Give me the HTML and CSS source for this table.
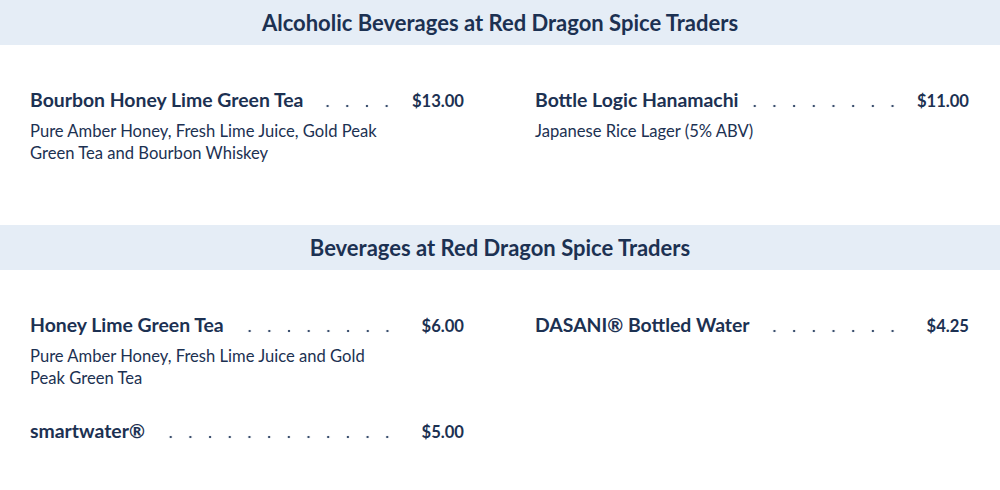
FILE: index.html
```html
<!DOCTYPE html>
<html lang="en">
<head>
<meta charset="utf-8">
<title>Red Dragon Spice Traders</title>
<link rel="stylesheet" href="styles.css">
</head>
<body>
<section class="menu-section">
  <h2 class="band">Alcoholic Beverages at Red Dragon Spice Traders</h2>
  <div class="items">
    <div class="item">
      <div class="item-head"><span class="name">Bourbon Honey Lime Green Tea</span><span class="dots"></span><span class="price">$13.00</span></div>
      <p class="desc">Pure Amber Honey, Fresh Lime Juice, Gold Peak Green Tea and Bourbon Whiskey</p>
    </div>
    <div class="item">
      <div class="item-head"><span class="name">Bottle Logic Hanamachi</span><span class="dots"></span><span class="price">$11.00</span></div>
      <p class="desc">Japanese Rice Lager (5% ABV)</p>
    </div>
  </div>
</section>
<section class="menu-section">
  <h2 class="band">Beverages at Red Dragon Spice Traders</h2>
  <div class="items">
    <div class="item">
      <div class="item-head"><span class="name">Honey Lime Green Tea</span><span class="dots"></span><span class="price">$6.00</span></div>
      <p class="desc">Pure Amber Honey, Fresh Lime Juice and Gold Peak Green Tea</p>
    </div>
    <div class="item">
      <div class="item-head"><span class="name">DASANI® Bottled Water</span><span class="dots"></span><span class="price">$4.25</span></div>
    </div>
    <div class="item">
      <div class="item-head"><span class="name">smartwater®</span><span class="dots"></span><span class="price">$5.00</span></div>
    </div>
  </div>
</section>
</body>
</html>
```
FILE: styles.css
```css
* { box-sizing: border-box; }
html, body { margin: 0; padding: 0; background: #fff; }
body {
  font-family: Lato, "Noto Sans", sans-serif;
  color: #1c3152;
}
.band {
  margin: 0;
  height: 45px;
  line-height: 45px;
  background: #e5edf6;
  text-align: center;
  font-size: 22px;
  font-weight: 700;
}
.items {
  display: grid;
  grid-template-columns: 434px 434px;
  column-gap: 71px;
  row-gap: 30px;
  padding: 43px 32px 61px 30px;
  align-items: start;
}
.item-head {
  display: flex;
  align-items: baseline;
  height: 24px;
  line-height: 24px;
}
.name {
  font-size: 19.4px;
  font-weight: 700;
  white-space: nowrap;
  margin-right: 10px;
}
.dots {
  flex: 1;
  align-self: stretch;
  background-image: radial-gradient(circle, #3b4f6e 1.1px, transparent 1.6px);
  background-size: 19.7px 4px;
  background-repeat: repeat-x;
  background-position: right 0 bottom 4px;
  margin-right: 15px;
}
.price {
  font-size: 16.6px;
  font-weight: 700;
  min-width: 52px;
  text-align: right;
}
.desc {
  margin: 8px 0 0;
  font-size: 16.6px;
  line-height: 22px;
  max-width: 370px;
}
```
